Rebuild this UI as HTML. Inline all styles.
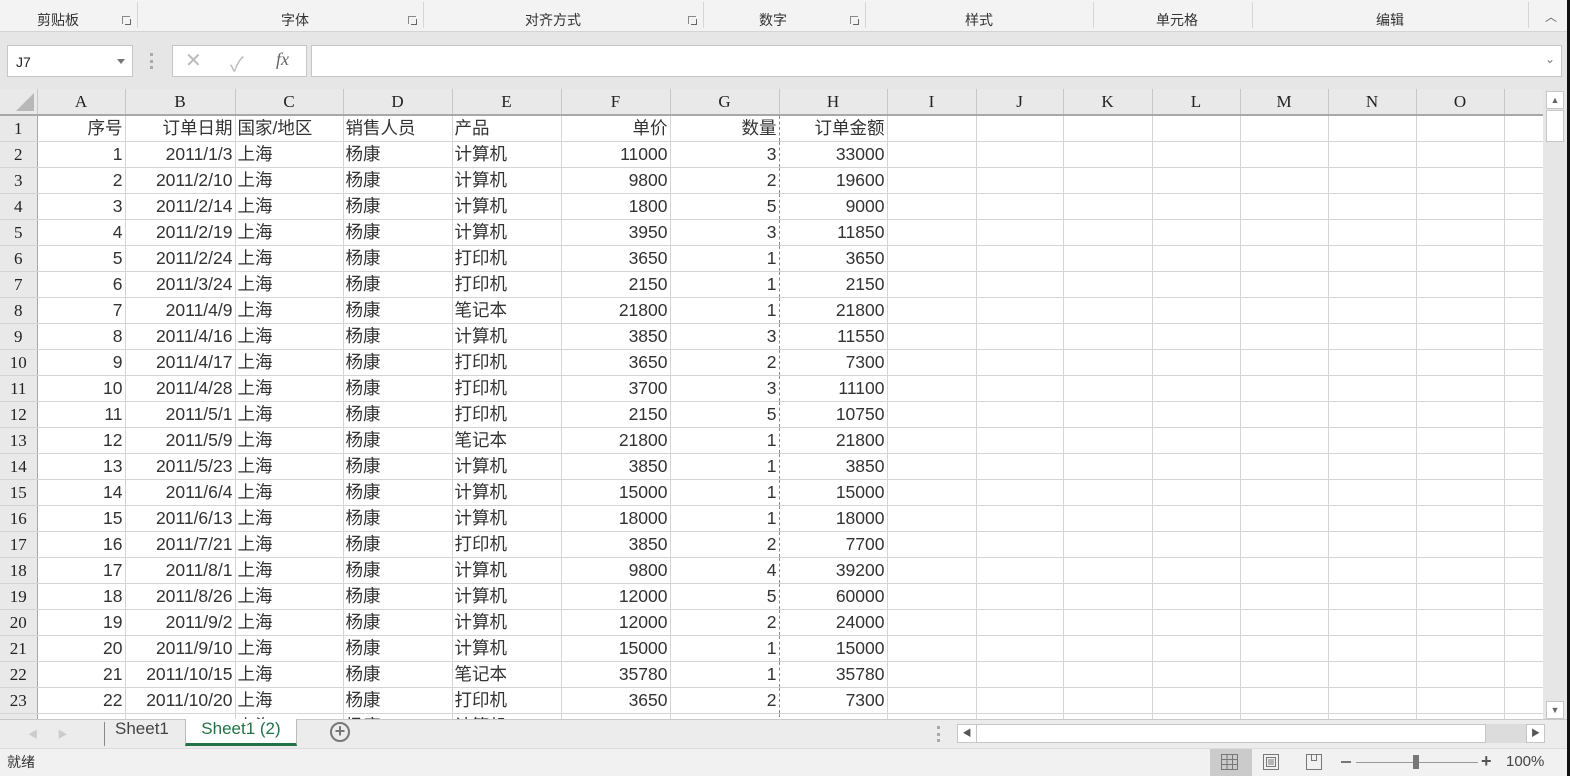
<!DOCTYPE html>
<html><head><meta charset="utf-8"><style>
*{margin:0;padding:0;box-sizing:border-box}
body{width:1570px;height:776px;overflow:hidden;background:#e6e6e6;font-family:"Liberation Sans","Noto Sans CJK SC",sans-serif;position:relative;color:#222}
.abs{position:absolute}
#rib{left:0;top:0;width:1570px;height:32px;background:#f3f3f3;border-bottom:1px solid #d4d4d4;font-size:14px;color:#333}
#rib .sep{position:absolute;top:2px;width:1px;height:26px;background:#d6d6d6}
#rib .lb{position:absolute;top:10px;transform:translateX(-50%);white-space:nowrap}
#rib .dl{position:absolute;top:16px;width:8px;height:8px;border-left:1px solid #888;border-top:1px solid #888}
#rib .dl:after{content:"";position:absolute;left:2px;top:2px;width:5px;height:5px;border-right:1px solid #666;border-bottom:1px solid #666}
.box{background:#fff;border:1px solid #c6c6c6}
#grid{left:0;top:89px;width:1543px;height:630px;overflow:hidden;background:#fff}
table{border-collapse:collapse;table-layout:fixed;width:1543px}
td{height:26px;border-right:1px solid #d4d4d4;border-bottom:1px solid #d4d4d4;font-size:17.5px;padding:0 2px;white-space:nowrap;overflow:hidden;line-height:25px;color:#333}
tr.h td{background:#e9e9e9;font-family:"Liberation Serif",serif;font-size:17px;text-align:center;height:25px;border-right:1px solid #c8c8c8;border-bottom:2px solid #a8a8a8;color:#222}
td.rh{background:#e9e9e9;text-align:center;font-family:"Liberation Serif",serif;font-size:17px;border-right:1px solid #a8a8a8;color:#222}
td.r{text-align:right}
td.g{border-right:1px dashed #888}
</style></head><body>
<div id="rib" class="abs">
<div class="lb" style="left:58px">剪贴板</div><div class="dl" style="left:122px"></div><div class="sep" style="left:137px"></div>
<div class="lb" style="left:295px">字体</div><div class="dl" style="left:408px"></div><div class="sep" style="left:423px"></div>
<div class="lb" style="left:553px">对齐方式</div><div class="dl" style="left:688px"></div><div class="sep" style="left:703px"></div>
<div class="lb" style="left:773px">数字</div><div class="dl" style="left:850px"></div><div class="sep" style="left:865px"></div>
<div class="lb" style="left:979px">样式</div><div class="sep" style="left:1093px"></div>
<div class="lb" style="left:1177px">单元格</div><div class="sep" style="left:1252px"></div>
<div class="lb" style="left:1390px">编辑</div><div class="sep" style="left:1528px"></div>
<div class="lb" style="left:1551px;top:8px;font-size:12px;color:#666">︿</div>
</div>
<div class="abs box" style="left:7px;top:45px;width:126px;height:32px;font-size:14px;padding:8px 0 0 8px">J7<span style="position:absolute;right:7px;top:13px;border:4px solid transparent;border-top:5px solid #777"></span></div>
<div class="abs" style="left:150px;top:53px;width:3px;height:16px;border-left:3px dotted #aaa"></div>
<div class="abs box" style="left:172px;top:45px;width:135px;height:32px;color:#bbb;font-size:20px">
<span class="abs" style="left:12px;top:2px">✕</span><span class="abs" style="left:57px;top:2px">✓</span><span class="abs" style="left:103px;top:3px;font-family:'Liberation Serif',serif;font-style:italic;font-size:18px;color:#666">fx</span></div>
<div class="abs box" style="left:311px;top:45px;width:1251px;height:32px"><span class="abs" style="right:6px;top:6px;font-size:12px;color:#777">⌄</span></div>
<div id="grid" class="abs">
<table>
<colgroup><col style="width:37px"><col style="width:88px"><col style="width:110px"><col style="width:108px"><col style="width:109px"><col style="width:109px"><col style="width:109px"><col style="width:109px"><col style="width:108px"><col style="width:89px"><col style="width:87px"><col style="width:89px"><col style="width:88px"><col style="width:88px"><col style="width:88px"><col style="width:88px"><col style="width:39px"></colgroup>
<tr class="h"><td style="position:relative"><span style="position:absolute;right:3px;bottom:3px;border-left:18px solid transparent;border-bottom:18px solid #b8b8b8"></span></td><td>A</td><td>B</td><td>C</td><td>D</td><td>E</td><td>F</td><td class="g" style="border-right:1px solid #c8c8c8">G</td><td>H</td><td>I</td><td>J</td><td>K</td><td>L</td><td>M</td><td>N</td><td>O</td><td></td></tr>
<tr><td class="rh">1</td><td class="r">序号</td><td class="r">订单日期</td><td>国家/地区</td><td>销售人员</td><td>产品</td><td class="r">单价</td><td class="r g">数量</td><td class="r">订单金额</td><td></td><td></td><td></td><td></td><td></td><td></td><td></td><td></td></tr>
<tr><td class="rh">2</td><td class="r">1</td><td class="r">2011/1/3</td><td>上海</td><td>杨康</td><td>计算机</td><td class="r">11000</td><td class="r g">3</td><td class="r">33000</td><td></td><td></td><td></td><td></td><td></td><td></td><td></td><td></td></tr>
<tr><td class="rh">3</td><td class="r">2</td><td class="r">2011/2/10</td><td>上海</td><td>杨康</td><td>计算机</td><td class="r">9800</td><td class="r g">2</td><td class="r">19600</td><td></td><td></td><td></td><td></td><td></td><td></td><td></td><td></td></tr>
<tr><td class="rh">4</td><td class="r">3</td><td class="r">2011/2/14</td><td>上海</td><td>杨康</td><td>计算机</td><td class="r">1800</td><td class="r g">5</td><td class="r">9000</td><td></td><td></td><td></td><td></td><td></td><td></td><td></td><td></td></tr>
<tr><td class="rh">5</td><td class="r">4</td><td class="r">2011/2/19</td><td>上海</td><td>杨康</td><td>计算机</td><td class="r">3950</td><td class="r g">3</td><td class="r">11850</td><td></td><td></td><td></td><td></td><td></td><td></td><td></td><td></td></tr>
<tr><td class="rh">6</td><td class="r">5</td><td class="r">2011/2/24</td><td>上海</td><td>杨康</td><td>打印机</td><td class="r">3650</td><td class="r g">1</td><td class="r">3650</td><td></td><td></td><td></td><td></td><td></td><td></td><td></td><td></td></tr>
<tr><td class="rh">7</td><td class="r">6</td><td class="r">2011/3/24</td><td>上海</td><td>杨康</td><td>打印机</td><td class="r">2150</td><td class="r g">1</td><td class="r">2150</td><td></td><td></td><td></td><td></td><td></td><td></td><td></td><td></td></tr>
<tr><td class="rh">8</td><td class="r">7</td><td class="r">2011/4/9</td><td>上海</td><td>杨康</td><td>笔记本</td><td class="r">21800</td><td class="r g">1</td><td class="r">21800</td><td></td><td></td><td></td><td></td><td></td><td></td><td></td><td></td></tr>
<tr><td class="rh">9</td><td class="r">8</td><td class="r">2011/4/16</td><td>上海</td><td>杨康</td><td>计算机</td><td class="r">3850</td><td class="r g">3</td><td class="r">11550</td><td></td><td></td><td></td><td></td><td></td><td></td><td></td><td></td></tr>
<tr><td class="rh">10</td><td class="r">9</td><td class="r">2011/4/17</td><td>上海</td><td>杨康</td><td>打印机</td><td class="r">3650</td><td class="r g">2</td><td class="r">7300</td><td></td><td></td><td></td><td></td><td></td><td></td><td></td><td></td></tr>
<tr><td class="rh">11</td><td class="r">10</td><td class="r">2011/4/28</td><td>上海</td><td>杨康</td><td>打印机</td><td class="r">3700</td><td class="r g">3</td><td class="r">11100</td><td></td><td></td><td></td><td></td><td></td><td></td><td></td><td></td></tr>
<tr><td class="rh">12</td><td class="r">11</td><td class="r">2011/5/1</td><td>上海</td><td>杨康</td><td>打印机</td><td class="r">2150</td><td class="r g">5</td><td class="r">10750</td><td></td><td></td><td></td><td></td><td></td><td></td><td></td><td></td></tr>
<tr><td class="rh">13</td><td class="r">12</td><td class="r">2011/5/9</td><td>上海</td><td>杨康</td><td>笔记本</td><td class="r">21800</td><td class="r g">1</td><td class="r">21800</td><td></td><td></td><td></td><td></td><td></td><td></td><td></td><td></td></tr>
<tr><td class="rh">14</td><td class="r">13</td><td class="r">2011/5/23</td><td>上海</td><td>杨康</td><td>计算机</td><td class="r">3850</td><td class="r g">1</td><td class="r">3850</td><td></td><td></td><td></td><td></td><td></td><td></td><td></td><td></td></tr>
<tr><td class="rh">15</td><td class="r">14</td><td class="r">2011/6/4</td><td>上海</td><td>杨康</td><td>计算机</td><td class="r">15000</td><td class="r g">1</td><td class="r">15000</td><td></td><td></td><td></td><td></td><td></td><td></td><td></td><td></td></tr>
<tr><td class="rh">16</td><td class="r">15</td><td class="r">2011/6/13</td><td>上海</td><td>杨康</td><td>计算机</td><td class="r">18000</td><td class="r g">1</td><td class="r">18000</td><td></td><td></td><td></td><td></td><td></td><td></td><td></td><td></td></tr>
<tr><td class="rh">17</td><td class="r">16</td><td class="r">2011/7/21</td><td>上海</td><td>杨康</td><td>打印机</td><td class="r">3850</td><td class="r g">2</td><td class="r">7700</td><td></td><td></td><td></td><td></td><td></td><td></td><td></td><td></td></tr>
<tr><td class="rh">18</td><td class="r">17</td><td class="r">2011/8/1</td><td>上海</td><td>杨康</td><td>计算机</td><td class="r">9800</td><td class="r g">4</td><td class="r">39200</td><td></td><td></td><td></td><td></td><td></td><td></td><td></td><td></td></tr>
<tr><td class="rh">19</td><td class="r">18</td><td class="r">2011/8/26</td><td>上海</td><td>杨康</td><td>计算机</td><td class="r">12000</td><td class="r g">5</td><td class="r">60000</td><td></td><td></td><td></td><td></td><td></td><td></td><td></td><td></td></tr>
<tr><td class="rh">20</td><td class="r">19</td><td class="r">2011/9/2</td><td>上海</td><td>杨康</td><td>计算机</td><td class="r">12000</td><td class="r g">2</td><td class="r">24000</td><td></td><td></td><td></td><td></td><td></td><td></td><td></td><td></td></tr>
<tr><td class="rh">21</td><td class="r">20</td><td class="r">2011/9/10</td><td>上海</td><td>杨康</td><td>计算机</td><td class="r">15000</td><td class="r g">1</td><td class="r">15000</td><td></td><td></td><td></td><td></td><td></td><td></td><td></td><td></td></tr>
<tr><td class="rh">22</td><td class="r">21</td><td class="r">2011/10/15</td><td>上海</td><td>杨康</td><td>笔记本</td><td class="r">35780</td><td class="r g">1</td><td class="r">35780</td><td></td><td></td><td></td><td></td><td></td><td></td><td></td><td></td></tr>
<tr><td class="rh">23</td><td class="r">22</td><td class="r">2011/10/20</td><td>上海</td><td>杨康</td><td>打印机</td><td class="r">3650</td><td class="r g">2</td><td class="r">7300</td><td></td><td></td><td></td><td></td><td></td><td></td><td></td><td></td></tr>
<tr><td class="rh">24</td><td class="r">23</td><td class="r">2011/11/5</td><td>上海</td><td>杨康</td><td>计算机</td><td class="r">15000</td><td class="r g">2</td><td class="r">30000</td><td></td><td></td><td></td><td></td><td></td><td></td><td></td><td></td></tr>
</table>
</div>
<div class="abs" style="left:1543px;top:89px;width:24px;height:630px;background:#e6e6e6"></div>
<div class="abs box" style="left:1546px;top:91px;width:18px;height:18px;font-size:9px;color:#666;text-align:center;line-height:16px">▲</div>
<div class="abs box" style="left:1546px;top:110px;width:18px;height:32px"></div>
<div class="abs box" style="left:1546px;top:701px;width:18px;height:18px;font-size:9px;color:#666;text-align:center;line-height:16px">▼</div>
<div class="abs" style="left:0;top:719px;width:1570px;height:29px;background:#ececec;border-top:1px solid #c8c8c8"></div>
<div class="abs" style="left:28px;top:726px;font-size:10px;color:#ccc">◀&nbsp;&nbsp;&nbsp;&nbsp;&nbsp;&nbsp;&nbsp;▶</div>
<div class="abs" style="left:104px;top:722px;width:1px;height:24px;background:#888"></div>
<div class="abs" style="left:115px;top:719px;font-size:17px;color:#444">Sheet1</div>
<div class="abs" style="left:185px;top:719px;width:112px;height:27px;background:#fff;border-left:1px solid #bbb;border-right:1px solid #bbb;border-bottom:3px solid #217346;color:#217346;font-size:17px;text-align:center">Sheet1 (2)</div>
<div class="abs" style="left:330px;top:722px;width:20px;height:20px;border:2px solid #777;border-radius:50%;color:#777;font-size:18px;line-height:14px;text-align:center;font-weight:bold">+</div>
<div class="abs" style="left:937px;top:726px;width:3px;height:16px;border-left:3px dotted #aaa"></div>
<div class="abs" style="left:957px;top:724px;width:572px;height:19px;background:#dcdcdc"></div>
<div class="abs box" style="left:957px;top:724px;width:20px;height:19px;font-size:9px;color:#555;text-align:center;line-height:17px">◀</div>
<div class="abs box" style="left:976px;top:724px;width:510px;height:19px"></div>
<div class="abs box" style="left:1526px;top:724px;width:19px;height:19px;font-size:9px;color:#555;text-align:center;line-height:17px">▶</div>
<div class="abs" style="left:0;top:748px;width:1570px;height:28px;background:#f1f1f1;border-top:1px solid #ddd"></div>
<div class="abs" style="left:7px;top:752px;font-size:14px;color:#333">就绪</div>
<div class="abs" style="left:1210px;top:749px;width:42px;height:27px;background:#cbcbcb"></div>
<svg class="abs" style="left:1220px;top:753px" width="20" height="18"><g fill="none" stroke="#777"><rect x="1.5" y="1.5" width="16" height="15"/><path d="M7 1.5v15M12.5 1.5v15M1.5 6.5h16M1.5 11.5h16"/></g></svg>
<svg class="abs" style="left:1262px;top:753px" width="18" height="18"><g fill="none" stroke="#777"><rect x="1.5" y="1.5" width="15" height="15"/><rect x="4.5" y="4.5" width="9" height="9"/><path d="M6 7h6M6 9h6M6 11h6"/></g></svg>
<svg class="abs" style="left:1305px;top:753px" width="18" height="18"><g fill="none" stroke="#777"><rect x="1.5" y="1.5" width="15" height="15"/><path d="M6.5 1.5v6h5v-6"/></g></svg>
<div class="abs" style="left:1341px;top:761px;width:10px;height:2px;background:#777"></div>
<div class="abs" style="left:1356px;top:762px;width:122px;height:1px;background:#999"></div>
<div class="abs" style="left:1413px;top:755px;width:6px;height:14px;background:#777"></div>
<div class="abs" style="left:1481px;top:751px;font-size:18px;color:#555;font-weight:bold">+</div>
<div class="abs" style="left:1506px;top:753px;font-size:15px;color:#444">100%</div>
<div class="abs" style="left:1567px;top:0;width:3px;height:776px;background:#111"></div>
</body></html>
